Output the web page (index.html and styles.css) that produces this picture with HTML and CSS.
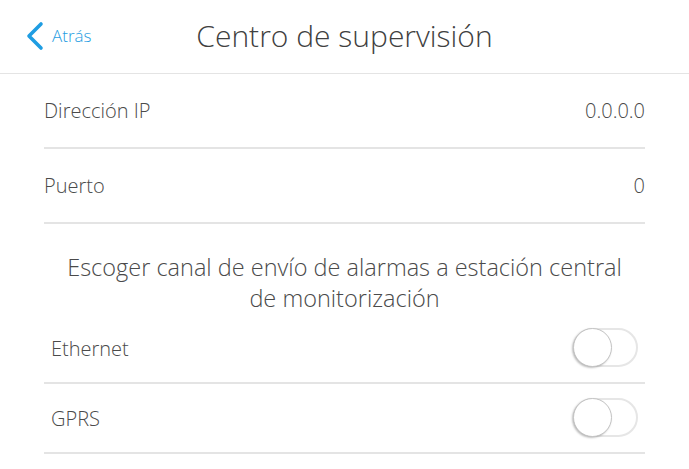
FILE: index.html
```html
<!DOCTYPE html>
<html lang="es">

<head>
  <meta charset="UTF-8">
  <meta name="viewport" content="width=device-width, initial-scale=1.0" />
  <title>Centro de supervisión</title>
  <link rel="stylesheet" href="styles.css">
</head>

<body>

  <!-- cabecera -->
  <div class="header">
    <a class="back" href="#">
      <svg width="18" height="30" viewBox="0 0 18 30">
        <polyline points="15,3 3,15 15,27" fill="none" stroke="#1f9de2" stroke-width="3.6" stroke-linecap="round" stroke-linejoin="round" />
      </svg>
      <span>Atrás</span>
    </a>
    <h1>Centro de supervisión</h1>
    <div></div>
  </div>

  <div class="content">
    <div class="row">
      <span class="label">Dirección IP</span>
      <span class="value">0.0.0.0</span>
    </div>
    <div class="row">
      <span class="label">Puerto</span>
      <span class="value">0</span>
    </div>

    <div class="section-title">Escoger canal de envío de alarmas a estación central<br>de monitorización</div>

    <div class="row switch-row">
      <span class="label">Ethernet</span>
      <div class="toggle"><div class="knob"></div></div>
    </div>
    <div class="row switch-row">
      <span class="label">GPRS</span>
      <div class="toggle"><div class="knob"></div></div>
    </div>
  </div>

</body>

</html>
```

FILE: styles.css
```css
:root {
  --text-color: #4a4a4a;
  --line-color: #e4e4e4;
  --blue: #1f9de2;
  --font-family: 'Open Sans', 'Noto Sans', sans-serif;
}

* {
  margin: 0;
  padding: 0;
  box-sizing: border-box;
}

body {
  background: #ffffff;
  font-family: var(--font-family);
  font-weight: 300;
  color: var(--text-color);
}

.header {
  height: 74px;
  display: grid;
  grid-template-columns: 1fr auto 1fr;
  align-items: center;
  border-bottom: 1px solid var(--line-color);
}

.back {
  display: flex;
  align-items: center;
  gap: 8px;
  padding-left: 26px;
  padding-bottom: 2px;
  color: var(--blue);
  text-decoration: none;
  font-size: 17px;
}

.back svg {
  display: block;
}

h1 {
  font-size: 30px;
  font-weight: 300;
  color: #404040;
  padding-bottom: 3px;
}

.content {
  padding: 0 44px;
}

.row {
  height: 75px;
  display: flex;
  justify-content: space-between;
  align-items: center;
  border-bottom: 2px solid var(--line-color);
  font-size: 20px;
}

.section-title {
  font-size: 23.5px;
  line-height: 31px;
  text-align: center;
  padding: 28px 10px 0;
}

.switch-row {
  height: 70px;
  padding: 0 7px;
}

.toggle {
  width: 65px;
  height: 39px;
  border: 2px solid #e6e6e6;
  border-radius: 20px;
  position: relative;
  margin-top: -2px;
}

.knob {
  position: absolute;
  top: -2px;
  left: -2px;
  width: 39px;
  height: 39px;
  border-radius: 50%;
  background: #ffffff;
  border: 1px solid #c4c4c4;
  box-shadow: -1px 1px 2px rgba(0, 0, 0, 0.25);
}
```
